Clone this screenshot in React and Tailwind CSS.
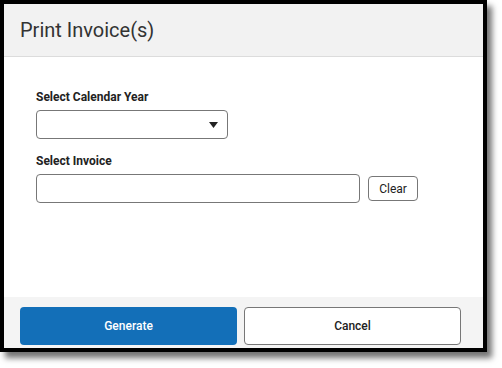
export default function App() {
  return (
    <div className="w-[502px] h-[368px] bg-white relative" style={{ fontFamily: "Roboto, 'Liberation Sans', sans-serif" }}>
      <div className="w-[487px] h-[352px] border-4 border-black bg-white flex flex-col shadow-[5px_6px_6px_rgba(0,0,0,0.55)]">
        <div className="h-[53px] shrink-0 bg-[#f2f2f2] border-b border-[#dcdcdc] flex items-center pl-4">
          <span className="text-[20px] text-[#333] leading-none">Print Invoice(s)</span>
        </div>
        <div className="flex-1 bg-white pl-8 pt-[34px]">
          <div className="text-[12px] font-bold text-[#222] leading-none">Select Calendar Year</div>
          <div className="mt-[7px] w-[192px] h-[29px] border border-[#777] rounded-[4px] flex items-center justify-end pr-[9px]">
            <svg width="9" height="6" viewBox="0 0 9 6"><path d="M0 0H9L4.5 6Z" fill="#222" /></svg>
          </div>
          <div className="mt-[16px] text-[12px] font-bold text-[#222] leading-none">Select Invoice</div>
          <div className="mt-[7px] flex items-center gap-2">
            <div className="w-[324px] h-[29px] border border-[#777] rounded-[4px]" />
            <div className="w-[50px] h-[25px] border border-[#777] rounded-[4px] flex items-center justify-center text-[12px] text-[#222]">Clear</div>
          </div>
        </div>
        <div className="h-[51px] shrink-0 bg-[#f4f4f4] flex items-start pt-[10px] pl-4 gap-[7px]">
          <div className="w-[217px] h-[38px] rounded-[4px] bg-[#136fb8] text-white text-[12px] font-medium flex items-center justify-center">Generate</div>
          <div className="w-[217px] h-[38px] rounded-[4px] bg-white border border-[#777] text-[#222] text-[12px] font-medium flex items-center justify-center">Cancel</div>
        </div>
      </div>
    </div>
  );
}
